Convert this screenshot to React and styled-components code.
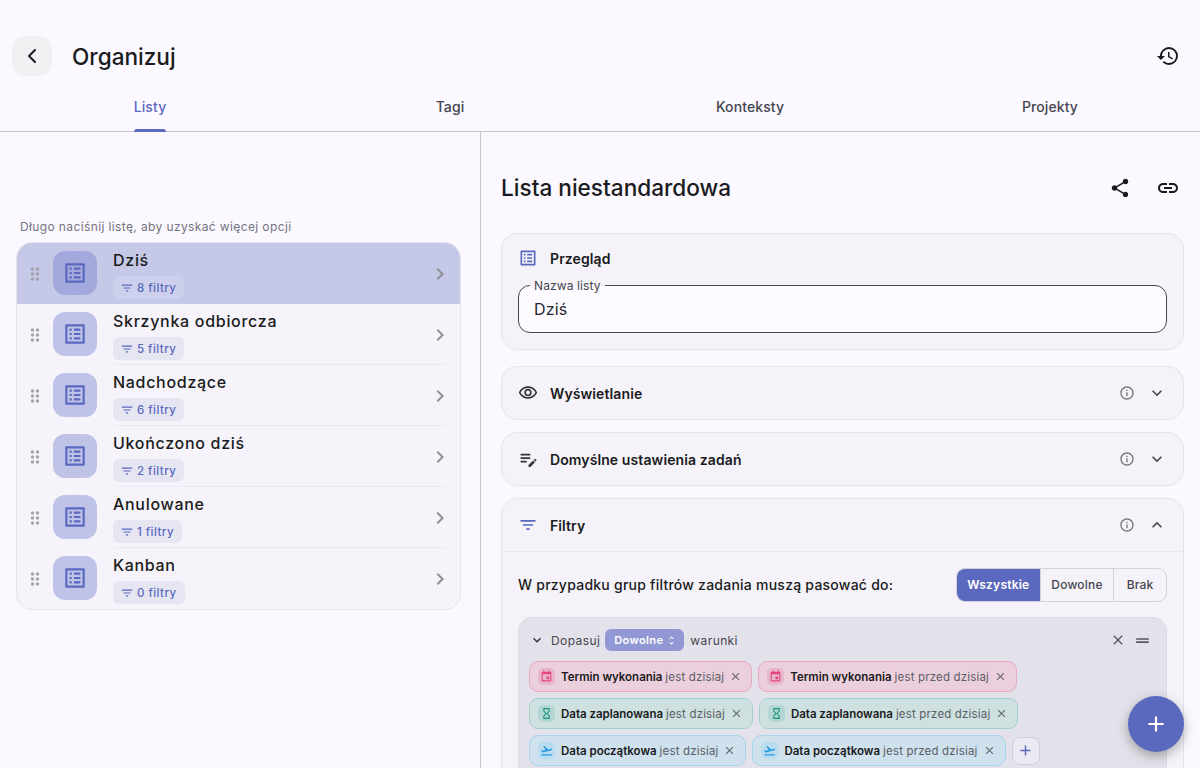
import React from 'react';
import styled, { createGlobalStyle } from 'styled-components';
import { ChevronLeft } from 'lucide-react';
import {
  MdHistory,
  MdShare,
  MdLink,
  MdOutlineVisibility,
  MdEditNote,
  MdFilterList,
  MdInfoOutline,
  MdExpandMore,
  MdExpandLess,
  MdChevronRight,
  MdDragIndicator,
  MdListAlt,
  MdEvent,
  MdHourglassEmpty,
  MdFlightTakeoff,
  MdClose,
  MdAdd,
  MdUnfoldMore,
  MdDragHandle,
} from 'react-icons/md';

const primary = '#5a68be';
const ink = '#1a1b20';

const lists = [
  { name: 'Dziś', filters: '8 filtry', active: true },
  { name: 'Skrzynka odbiorcza', filters: '5 filtry' },
  { name: 'Nadchodzące', filters: '6 filtry' },
  { name: 'Ukończono dziś', filters: '2 filtry' },
  { name: 'Anulowane', filters: '1 filtry' },
  { name: 'Kanban', filters: '0 filtry' },
];

const chipKinds = {
  due: { bg: '#eccfdc', border: '#e6a9c2', box: '#e6b6ca', color: '#e7447f', Icon: MdEvent },
  plan: { bg: '#cee0e0', border: '#a2d1cd', box: '#b4d6d3', color: '#17957f', Icon: MdHourglassEmpty },
  start: { bg: '#cee1ed', border: '#a6d5ec', box: '#b9dcf0', color: '#249be0', Icon: MdFlightTakeoff },
};

const chipRows = [
  [
    { kind: 'due', label: 'Termin wykonania', rest: 'jest dzisiaj' },
    { kind: 'due', label: 'Termin wykonania', rest: 'jest przed dzisiaj' },
  ],
  [
    { kind: 'plan', label: 'Data zaplanowana', rest: 'jest dzisiaj' },
    { kind: 'plan', label: 'Data zaplanowana', rest: 'jest przed dzisiaj' },
  ],
  [
    { kind: 'start', label: 'Data początkowa', rest: 'jest dzisiaj' },
    { kind: 'start', label: 'Data początkowa', rest: 'jest przed dzisiaj' },
  ],
];

const App = () => (
  <Page>
    <GlobalStyle />
    <Header>
      <BackButton>
        <ChevronLeft size={24} strokeWidth={2} />
      </BackButton>
      <PageTitle>Organizuj</PageTitle>
      <HeaderAction>
        <MdHistory size={24} />
      </HeaderAction>
    </Header>
    <Tabs>
      <Tab $active>
        <span>Listy</span>
      </Tab>
      <Tab>
        <span>Tagi</span>
      </Tab>
      <Tab>
        <span>Konteksty</span>
      </Tab>
      <Tab>
        <span>Projekty</span>
      </Tab>
    </Tabs>
    <Columns>
      <LeftPane>
        <Hint>Długo naciśnij listę, aby uzyskać więcej opcji</Hint>
        <ListCard>
          {lists.map(item => (
            <ListRow key={item.name} $active={item.active}>
              <Drag>
                <MdDragIndicator size={20} />
              </Drag>
              <ListIcon $active={item.active}>
                <MdListAlt size={26} />
              </ListIcon>
              <ListBody>
                <ListName>{item.name}</ListName>
                <FilterBadge $active={item.active}>
                  <MdFilterList size={14} />
                  {item.filters}
                </FilterBadge>
              </ListBody>
              <RowChevron>
                <MdChevronRight size={24} />
              </RowChevron>
            </ListRow>
          ))}
        </ListCard>
      </LeftPane>
      <RightPane>
        <DetailHeader>
          <DetailTitle>Lista niestandardowa</DetailTitle>
          <DetailActions>
            <MdShare size={22} />
            <MdLink size={24} />
          </DetailActions>
        </DetailHeader>
        <OverviewCard>
          <SectionLabel>
            <SectionIcon $color={primary}>
              <MdListAlt size={20} />
            </SectionIcon>
            Przegląd
          </SectionLabel>
          <Field>
            <FieldLabel>Nazwa listy</FieldLabel>
            Dziś
          </Field>
        </OverviewCard>
        <Section>
          <SectionHead>
            <SectionLabel>
              <SectionIcon>
                <MdOutlineVisibility size={20} />
              </SectionIcon>
              Wyświetlanie
            </SectionLabel>
            <SectionTools>
              <MdInfoOutline size={16} />
              <MdExpandMore size={20} />
            </SectionTools>
          </SectionHead>
        </Section>
        <Section>
          <SectionHead>
            <SectionLabel>
              <SectionIcon>
                <MdEditNote size={22} />
              </SectionIcon>
              Domyślne ustawienia zadań
            </SectionLabel>
            <SectionTools>
              <MdInfoOutline size={16} />
              <MdExpandMore size={20} />
            </SectionTools>
          </SectionHead>
        </Section>
        <FilterSection>
          <SectionHead $divided>
            <SectionLabel>
              <SectionIcon $color={primary}>
                <MdFilterList size={20} />
              </SectionIcon>
              Filtry
            </SectionLabel>
            <SectionTools>
              <MdInfoOutline size={16} />
              <MdExpandLess size={20} />
            </SectionTools>
          </SectionHead>
          <MatchRow>
            <MatchText>W przypadku grup filtrów zadania muszą pasować do:</MatchText>
            <Segments>
              <Segment $active>Wszystkie</Segment>
              <Segment>Dowolne</Segment>
              <Segment>Brak</Segment>
            </Segments>
          </MatchRow>
          <Group>
            <GroupHead>
              <GroupCaret>
                <MdExpandMore size={16} />
              </GroupCaret>
              Dopasuj
              <GroupSelect>
                Dowolne
                <MdUnfoldMore size={11} />
              </GroupSelect>
              warunki
              <GroupTools>
                <MdClose size={16} />
                <MdDragHandle size={19} />
              </GroupTools>
            </GroupHead>
            {chipRows.map((row, index) => (
              <ChipRow key={row[0].kind}>
                {row.map(chip => {
                  const kind = chipKinds[chip.kind];
                  const Icon = kind.Icon;
                  return (
                    <Chip key={chip.rest} $bg={kind.bg} $border={kind.border}>
                      <ChipIcon $bg={kind.box} $color={kind.color}>
                        <Icon size={13} />
                      </ChipIcon>
                      <ChipLabel>{chip.label}</ChipLabel>
                      <ChipRest>{chip.rest}</ChipRest>
                      <ChipClose>
                        <MdClose size={13} />
                      </ChipClose>
                    </Chip>
                  );
                })}
                {index === chipRows.length - 1 && (
                  <AddChip>
                    <MdAdd size={17} />
                  </AddChip>
                )}
              </ChipRow>
            ))}
          </Group>
        </FilterSection>
      </RightPane>
    </Columns>
    <Fab>
      <MdAdd size={26} />
    </Fab>
  </Page>
);

export default App;

const GlobalStyle = createGlobalStyle`
  html, body {
    margin: 0;
    padding: 0;
    overflow: hidden;
    background: #fbf8ff;
  }
  * {
    box-sizing: border-box;
  }
`;

const Page = styled.div`
  position: relative;
  width: 1200px;
  height: 768px;
  overflow: hidden;
  display: flex;
  flex-direction: column;
  background: #fbf8ff;
  color: ${ink};
  font-family: Inter, 'Noto Sans', sans-serif;
`;

const Header = styled.header`
  flex: none;
  height: 84px;
  padding: 36px 20px 8px 12px;
  display: flex;
  align-items: center;
`;

const BackButton = styled.button`
  width: 40px;
  height: 40px;
  padding: 0;
  border: 0;
  border-radius: 12px;
  background: #f1f1f4;
  color: ${ink};
  display: flex;
  align-items: center;
  justify-content: center;
`;

const PageTitle = styled.h1`
  margin: 0 0 0 20px;
  flex: 1;
  font-size: 22.6px;
  font-weight: 500;
`;

const HeaderAction = styled.div`
  display: flex;
  color: ${ink};
`;

const Tabs = styled.nav`
  flex: none;
  height: 48px;
  display: grid;
  grid-template-columns: repeat(4, 1fr);
  border-bottom: 1px solid #c6c5d0;
`;

const Tab = styled.div`
  display: flex;
  justify-content: center;
  span {
    position: relative;
    height: 47px;
    padding-top: 14px;
    font-size: 14px;
    font-weight: 500;
    letter-spacing: 0.1px;
    color: ${({ $active }) => ($active ? primary : '#45464f')};
  }
  span::after {
    content: '';
    display: ${({ $active }) => ($active ? 'block' : 'none')};
    position: absolute;
    left: 0;
    right: 0;
    bottom: -1px;
    height: 3px;
    border-radius: 3px 3px 0 0;
    background: ${primary};
  }
`;

const Columns = styled.div`
  flex: 1;
  min-height: 0;
  display: flex;
`;

const LeftPane = styled.section`
  flex: none;
  width: 481px;
  padding: 87px 19px 0 16px;
  border-right: 1px solid #c6c5d0;
`;

const Hint = styled.div`
  height: 23px;
  padding-left: 4px;
  font-size: 12px;
  line-height: 16px;
  letter-spacing: 0.38px;
  color: #75757f;
`;

const ListCard = styled.div`
  border: 1px solid #e6e4ec;
  border-radius: 16px;
  background: #f6f4fa;
  overflow: hidden;
`;

const ListRow = styled.div`
  position: relative;
  height: 61px;
  display: flex;
  align-items: center;
  padding: 0 8px 0 7px;
  background: ${({ $active }) => ($active ? '#c5c8e6' : 'transparent')};
  &::after {
    content: '';
    position: absolute;
    left: 96px;
    right: 15px;
    bottom: 0;
    height: 1px;
    background: #eae8f0;
  }
  &:first-child::after,
  &:last-child::after {
    display: none;
  }
`;

const Drag = styled.div`
  width: 22px;
  display: flex;
  justify-content: center;
  color: #a4a4ad;
`;

const ListIcon = styled.div`
  width: 44px;
  height: 44px;
  margin: 0 0 1px 7px;
  border-radius: 12px;
  background: ${({ $active }) => ($active ? '#a3a9dc' : '#bfc3e8')};
  color: ${primary};
  display: flex;
  align-items: center;
  justify-content: center;
`;

const ListBody = styled.div`
  flex: 1;
  min-width: 0;
  margin-left: 16px;
  align-self: stretch;
  display: flex;
  flex-direction: column;
  align-items: flex-start;
  padding-top: 5px;
`;

const ListName = styled.div`
  font-size: 16px;
  line-height: 24px;
  font-weight: 500;
  letter-spacing: 0.7px;
  color: ${ink};
`;

const FilterBadge = styled.div`
  height: 23px;
  margin-top: 4px;
  padding: 0 8px 0 7px;
  display: flex;
  align-items: center;
  gap: 3px;
  border-radius: 6px;
  background: ${({ $active }) => ($active ? '#cdd0ec' : '#e6e6f3')};
  color: ${primary};
  font-size: 11.5px;
  font-weight: 500;
  letter-spacing: 0.45px;
`;

const RowChevron = styled.div`
  display: flex;
  color: #8f8f99;
`;

const RightPane = styled.section`
  flex: 1;
  min-width: 0;
  padding: 0 16px 0 20px;
  display: flex;
  flex-direction: column;
`;

const DetailHeader = styled.div`
  flex: none;
  height: 101px;
  padding: 10px 4px 0 0;
  display: flex;
  align-items: center;
  justify-content: space-between;
`;

const DetailTitle = styled.h2`
  margin: 0;
  font-size: 22.6px;
  font-weight: 500;
`;

const DetailActions = styled.div`
  display: flex;
  align-items: center;
  gap: 25px;
  color: ${ink};
`;

const Section = styled.div`
  flex: none;
  margin-bottom: 12px;
  border: 1px solid #e4e2ea;
  border-radius: 16px;
  background: #f5f3f9;
`;

const OverviewCard = styled(Section)`
  height: 117px;
  margin-bottom: 16px;
  padding: 14px 16px 0;
`;

const FilterSection = styled(Section)`
  margin-bottom: 0;
`;

const SectionHead = styled.div`
  height: ${({ $divided }) => ($divided ? '53px' : '52px')};
  padding: 0 16px;
  display: flex;
  align-items: center;
  justify-content: space-between;
  border-bottom: ${({ $divided }) => ($divided ? '1px solid #e9e7ef' : '0')};
`;

const SectionLabel = styled.div`
  display: flex;
  align-items: center;
  font-size: 14px;
  font-weight: 600;
  letter-spacing: 0.1px;
  color: ${ink};
`;

const SectionIcon = styled.span`
  width: 21px;
  margin-right: 11px;
  display: flex;
  align-items: center;
  color: ${({ $color }) => $color || '#34353c'};
`;

const SectionTools = styled.div`
  display: flex;
  align-items: center;
  gap: 12px;
  color: #75757f;
  svg:last-child {
    color: #45464f;
  }
`;

const Field = styled.div`
  position: relative;
  height: 48px;
  margin-top: 17px;
  padding: 12px 15px 0;
  border: 1px solid #45464f;
  border-radius: 12px;
  background: #fdfbff;
  font-size: 16px;
  line-height: 22px;
  letter-spacing: 0.2px;
  color: #26272d;
`;

const FieldLabel = styled.span`
  position: absolute;
  top: -8px;
  left: 11px;
  padding: 0 4px;
  background: linear-gradient(#f5f3f9 50%, #fdfbff 50%);
  font-size: 12px;
  line-height: 15px;
  letter-spacing: 0.1px;
  color: #45464f;
`;

const MatchRow = styled.div`
  height: 65px;
  padding: 0 16px;
  display: flex;
  align-items: center;
  justify-content: space-between;
`;

const MatchText = styled.div`
  font-size: 14px;
  font-weight: 500;
  letter-spacing: 0.24px;
  color: ${ink};
`;

const Segments = styled.div`
  height: 34px;
  display: flex;
  border: 1px solid #d3d2da;
  border-radius: 9px;
  overflow: hidden;
`;

const Segment = styled.div`
  padding: 0 10.5px;
  display: flex;
  align-items: center;
  font-size: 12px;
  font-weight: ${({ $active }) => ($active ? 600 : 500)};
  letter-spacing: 0.2px;
  color: ${({ $active }) => ($active ? '#fff' : '#45464f')};
  background: ${({ $active }) => ($active ? primary : 'transparent')};
  & + & {
    border-left: 1px solid #d3d2da;
  }
  &:last-child {
    padding: 0 12.5px;
  }
`;

const Group = styled.div`
  margin: 0 16px;
  height: 170px;
  padding: 9px 10px 8px;
  border: 1px solid #dbd9e1;
  border-radius: 14px;
  background: #e3e1e9;
`;

const GroupHead = styled.div`
  height: 26px;
  margin-bottom: 8px;
  display: flex;
  align-items: center;
  gap: 6px;
  font-size: 12px;
  letter-spacing: 0.4px;
  color: #45464f;
`;

const GroupCaret = styled.span`
  display: flex;
  color: #34353c;
`;

const GroupSelect = styled.span`
  height: 22px;
  padding: 0 7px 0 9px;
  margin-left: -1px;
  display: flex;
  align-items: center;
  gap: 3px;
  border-radius: 6px;
  background: #9198d4;
  color: #fff;
  font-size: 11px;
  font-weight: 600;
`;

const GroupTools = styled.span`
  margin-left: auto;
  margin-right: 4px;
  display: flex;
  align-items: center;
  gap: 7px;
  color: #55565e;
`;

const ChipRow = styled.div`
  height: 31px;
  margin-bottom: 6px;
  display: flex;
  align-items: center;
  gap: 6px;
`;

const Chip = styled.div`
  height: 31px;
  padding: 0 9px 0 8px;
  display: flex;
  align-items: center;
  border: 1px solid ${({ $border }) => $border};
  border-radius: 9px;
  background: ${({ $bg }) => $bg};
  font-size: 11.5px;
`;

const ChipIcon = styled.span`
  width: 17px;
  height: 17px;
  margin-right: 6px;
  border-radius: 5px;
  display: flex;
  align-items: center;
  justify-content: center;
  background: ${({ $bg }) => $bg};
  color: ${({ $color }) => $color};
`;

const ChipLabel = styled.span`
  font-weight: 600;
  letter-spacing: -0.01px;
  color: ${ink};
`;

const ChipRest = styled.span`
  margin-left: 3px;
  letter-spacing: 0.17px;
  color: #5c5d66;
`;

const ChipClose = styled.span`
  margin-left: 5px;
  display: flex;
  color: #63646c;
`;

const AddChip = styled.span`
  width: 28px;
  height: 28px;
  display: flex;
  align-items: center;
  justify-content: center;
  border: 1px solid #cfced6;
  border-radius: 8px;
  background: #ebe9f1;
  color: ${primary};
`;

const Fab = styled.button`
  position: absolute;
  left: 1128px;
  top: 696px;
  width: 56px;
  height: 56px;
  padding: 0;
  border: 0;
  border-radius: 50%;
  background: ${primary};
  color: #fff;
  display: flex;
  align-items: center;
  justify-content: center;
  box-shadow: 0 4px 12px rgba(0, 0, 0, 0.3);
`;
